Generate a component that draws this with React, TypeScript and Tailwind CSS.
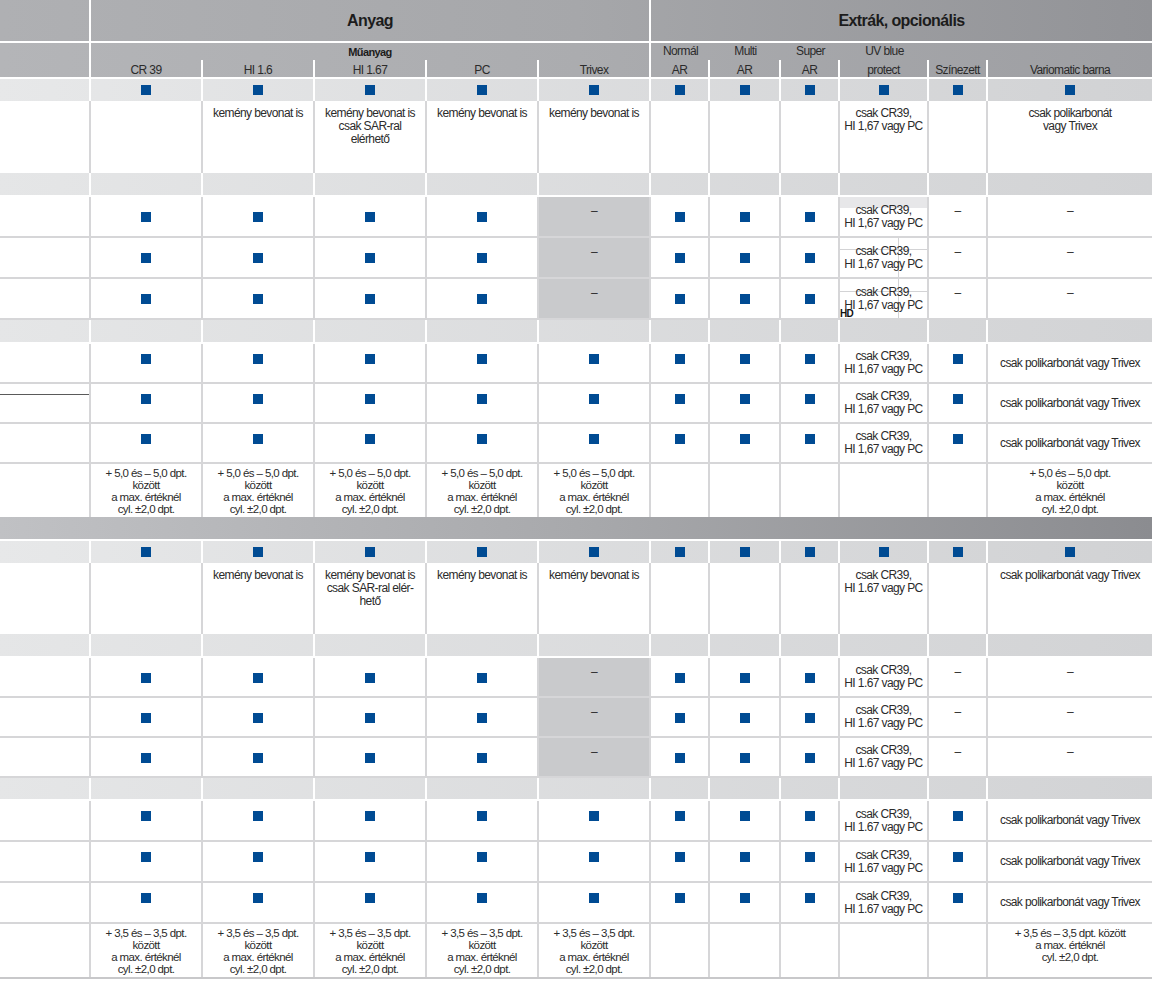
import React from "react";

const GRID =
  "grid grid-cols-[91px_112px_112px_112px_112px_112px_59px_71px_59px_89px_59px_1fr]";

type Group = "A" | "B";

const uv67 = "csak CR39,\nHI 1,67 vagy PC";
const uv67dot = "csak CR39,\nHI 1.67 vagy PC";
const vario = "csak polikarbonát vagy Trivex";
const dpt5 = "+ 5,0 és – 5,0 dpt.\nközött\na max. értéknél\ncyl. ±2,0 dpt.";
const dpt35 = "+ 3,5 és – 3,5 dpt.\nközött\na max. értéknél\ncyl. ±2,0 dpt.";

const rowA = (uv: string) => ["", "S", "S", "S", "S", "G", "S", "S", "S", uv, "D", "D"];
const rowB = (uv: string) => ["", "S", "S", "S", "S", "S", "S", "S", "S", uv, "S", vario];

function Square() {
  return <span className="block h-[10px] w-[10px] bg-[#004b93]" />;
}

function SquaresRow() {
  return (
    <div className={`${GRID} h-[22px] bg-linear-to-r from-[#e7e8e9] to-[#d1d2d4]`}>
      {Array.from({ length: 12 }).map((_, i) => (
        <div
          key={i}
          className="flex items-center justify-center border-r-2 border-white last:border-r-0"
        >
          {i > 0 && <Square />}
        </div>
      ))}
    </div>
  );
}

function Band({ h = "h-[24px]" }: { h?: string }) {
  return (
    <div
      className={`${GRID} ${h} border-b-2 border-white bg-linear-to-r from-[#e5e6e7] to-[#d2d3d5]`}
    >
      {Array.from({ length: 12 }).map((_, i) => (
        <div key={i} className="border-r-2 border-white last:border-r-0" />
      ))}
    </div>
  );
}

function TextRow({ cells, h }: { cells: string[]; h: string }) {
  return (
    <div className={`${GRID} ${h}`}>
      {cells.map((c, i) => (
        <div
          key={i}
          className="whitespace-pre-line border-r-2 border-[#d6d6d8] pt-[6px] text-center leading-[13px] last:border-r-0"
        >
          {c}
        </div>
      ))}
    </div>
  );
}

function DptRow({ cells, h }: { cells: string[]; h: string }) {
  return (
    <div className={`${GRID} ${h}`}>
      {cells.map((c, i) => (
        <div
          key={i}
          className="whitespace-pre-line border-r-2 border-[#d6d6d8] pt-[3px] text-center text-[11.5px] leading-[12px] last:border-r-0"
        >
          {c}
        </div>
      ))}
    </div>
  );
}

function DataCell({ v, group }: { v: string; group: Group }) {
  const base =
    "relative flex justify-center overflow-hidden border-r-2 border-[#d6d6d8] last:border-r-0";
  if (v === "S")
    return (
      <div className={`${base} items-start ${group === "A" ? "pt-[15px]" : "pt-[10px]"}`}>
        <Square />
      </div>
    );
  if (v === "D") return <div className={`${base} items-start pt-[8px] leading-[13px]`}>–</div>;
  if (v === "G")
    return (
      <div className={`${base} items-start bg-[#c9cacc] pt-[8px] leading-[13px]`}>–</div>
    );
  return (
    <div className={`${base} items-center whitespace-pre-line text-center leading-[13px]`}>
      {v}
    </div>
  );
}

function DataRow({
  cells,
  group,
  h,
  extra,
  leftMark,
}: {
  cells: string[];
  group: Group;
  h: string;
  extra?: React.ReactNode;
  leftMark?: boolean;
}) {
  return (
    <div className={`${GRID} ${h} border-b-2 border-[#d6d6d8]`}>
      {cells.map((c, i) => {
        if (i === 0 && leftMark)
          return (
            <div key={i} className="relative border-r-2 border-[#d6d6d8]">
              <span className="absolute left-0 right-0 top-[10px] h-px bg-[#5a5a5a]" />
            </div>
          );
        if (i === 9 && extra)
          return (
            <div
              key={i}
              className="relative flex items-center justify-center overflow-hidden whitespace-pre-line border-r-2 border-[#d6d6d8] text-center leading-[13px]"
            >
              {extra}
              <span className="relative">{c}</span>
            </div>
          );
        return <DataCell key={i} v={c} group={group} />;
      })}
    </div>
  );
}

export default function App() {
  return (
    <div className="w-[1152px] bg-white font-['Liberation_Sans',Arial,sans-serif] text-[12px] tracking-[-0.6px] text-[#2b2b2b]">
      {/* header */}
      <div
        className={`${GRID} h-[43px] border-b-2 border-white bg-linear-to-r from-[#afb0b3] via-[#a6a7aa] to-[#929397]`}
      >
        <div className="border-r-2 border-white" />
        <div className="col-span-5 flex items-center justify-center border-r-2 border-white text-[16px] font-bold text-[#1c1c1c]">
          Anyag
        </div>
        <div className="col-span-6 flex items-center justify-center text-[16px] font-bold text-[#1c1c1c]">
          Extrák, opcionális
        </div>
      </div>
      <div
        className={`${GRID} h-[36px] grid-rows-[17px_17px] border-b-2 border-white bg-linear-to-r from-[#b4b5b8] via-[#abacaf] to-[#9d9ea2] leading-[17px]`}
      >
        <div className="row-span-2 border-r-2 border-white" />
        <div className="col-span-5 border-r-2 border-white pt-px text-center text-[11px] font-bold text-[#1c1c1c]">
          Műanyag
        </div>
        <div className="text-center">Normál</div>
        <div className="text-center">Multi</div>
        <div className="text-center">Super</div>
        <div className="text-center">UV blue</div>
        <div />
        <div />
        {["CR 39", "HI 1.6", "HI 1.67", "PC", "Trivex", "AR", "AR", "AR", "protect", "Színezett"].map(
          (t, i) => (
            <div key={i} className="border-r-2 border-white pt-[2px] text-center">
              {t}
            </div>
          ),
        )}
        <div className="pt-[2px] text-center">Variomatic barna</div>
      </div>

      {/* block 1 */}
      <SquaresRow />
      <TextRow
        h="h-[72px]"
        cells={[
          "",
          "",
          "kemény bevonat is",
          "kemény bevonat is\ncsak SAR-ral\nelérhető",
          "kemény bevonat is",
          "kemény bevonat is",
          "",
          "",
          "",
          uv67,
          "",
          "csak polikarbonát\nvagy Trivex",
        ]}
      />
      <Band />
      <DataRow
        cells={rowA(uv67)}
        group="A"
        h="h-[41px]"
        extra={<span className="absolute left-0 right-0 top-0 h-[11px] bg-[#e7e7e9]" />}
      />
      <DataRow
        cells={rowA(uv67)}
        group="A"
        h="h-[41px]"
        extra={
          <>
            <span className="absolute left-0 right-0 top-[11px] h-px bg-[#d3d3d5]" />
            <span className="absolute bottom-0 left-[58px] top-0 w-px bg-[#d3d3d5]" />
          </>
        }
      />
      <DataRow
        cells={rowA(uv67)}
        group="A"
        h="h-[41px]"
        extra={
          <>
            <span className="absolute left-0 right-0 top-[12px] h-px bg-[#d3d3d5]" />
            <span className="absolute bottom-0 left-[58px] top-0 w-px bg-[#d3d3d5]" />
            <span className="absolute left-0 top-[30px] text-[10px] font-bold leading-none text-[#111]">
              HD
            </span>
          </>
        }
      />
      <Band />
      <DataRow cells={rowB(uv67)} group="B" h="h-[40px]" />
      <DataRow cells={rowB(uv67)} group="B" h="h-[40px]" leftMark />
      <DataRow cells={rowB(uv67)} group="B" h="h-[40px]" />
      <DptRow h="h-[53px]" cells={["", dpt5, dpt5, dpt5, dpt5, dpt5, "", "", "", "", "", dpt5]} />

      {/* divider */}
      <div className="h-[24px] border-b-2 border-white bg-linear-to-r from-[#c0c1c4] via-[#a8a9ac] to-[#8b8c90]" />

      {/* block 2 */}
      <SquaresRow />
      <TextRow
        h="h-[71px]"
        cells={[
          "",
          "",
          "kemény bevonat is",
          "kemény bevonat is\ncsak SAR-ral elér-\nhető",
          "kemény bevonat is",
          "kemény bevonat is",
          "",
          "",
          "",
          uv67dot,
          "",
          vario,
        ]}
      />
      <Band />
      <DataRow cells={rowA(uv67dot)} group="A" h="h-[40px]" />
      <DataRow cells={rowA(uv67dot)} group="A" h="h-[40px]" />
      <DataRow cells={rowA(uv67dot)} group="A" h="h-[40px]" />
      <Band h="h-[23px]" />
      <DataRow cells={rowB(uv67dot)} group="B" h="h-[41px]" />
      <DataRow cells={rowB(uv67dot)} group="B" h="h-[41px]" />
      <DataRow cells={rowB(uv67dot)} group="B" h="h-[41px]" />
      <div className="border-b-2 border-[#c8c8ca]">
        <DptRow
          h="h-[53px]"
          cells={[
            "",
            dpt35,
            dpt35,
            dpt35,
            dpt35,
            dpt35,
            "",
            "",
            "",
            "",
            "",
            "+ 3,5 és – 3,5 dpt. között\na max. értéknél\ncyl. ±2,0 dpt.",
          ]}
        />
      </div>
    </div>
  );
}
